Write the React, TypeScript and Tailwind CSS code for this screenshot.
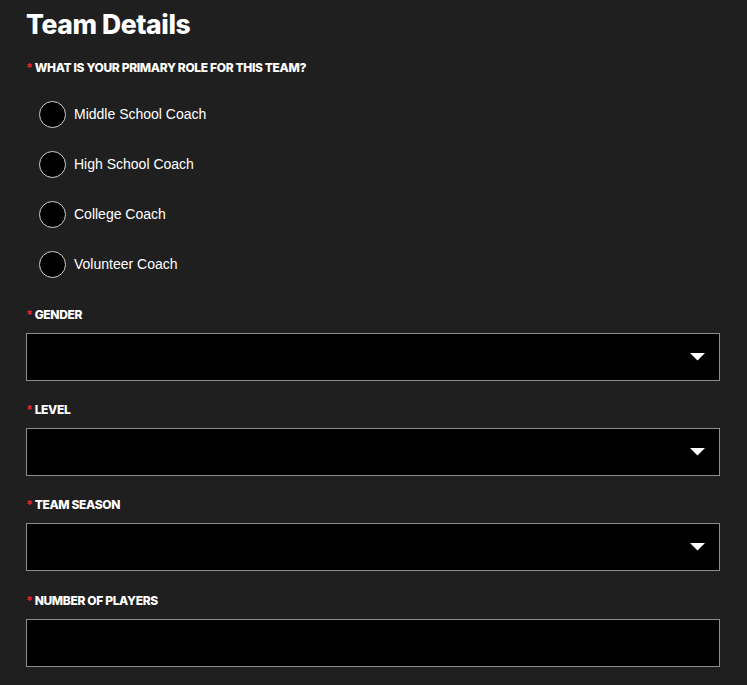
import React from "react";

const roles = ["Middle School Coach", "High School Coach", "College Coach", "Volunteer Coach"];

function Label({ text }: { text: string }) {
  return (
    <div className="flex items-center leading-4 text-[12px] font-extrabold uppercase tracking-[-0.35px] text-white [font-family:Inter,sans-serif]">
      <span className="text-[#e8242b] mr-[2px]">*</span>
      <span>{text}</span>
    </div>
  );
}

function SelectBox() {
  return (
    <div className="mt-[10px] h-[48px] bg-black border border-[#8c8c8c] flex items-center justify-end pr-[14px]">
      <svg width="15" height="8" viewBox="0 0 15 8">
        <polygon points="0,0 15,0 7.5,7.5" fill="#ffffff" />
      </svg>
    </div>
  );
}

function InputBox() {
  return <div className="mt-[10px] h-[48px] bg-black border border-[#8c8c8c]" />;
}

export default function App() {
  return (
    <div className="w-[747px] h-[685px] bg-[#1f1f1f] pl-[26px] pr-[27px] pt-[8px] overflow-hidden">
      <h1 className="text-[26.5px] leading-[32px] font-extrabold text-white tracking-[-0.4px] [font-family:Inter,sans-serif]">
        Team Details
      </h1>
      <div className="mt-[20px]">
        <Label text="What is your primary role for this team?" />
      </div>
      <div className="mt-[13px] flex flex-col">
        {roles.map((r) => (
          <label key={r} className="h-[50px] flex items-center pl-[13px]">
            <span className="w-[27px] h-[27px] rounded-full bg-black border border-[#d0d0d0]" />
            <span className="ml-[8px] text-[14px] text-white [font-family:'Liberation_Sans',Arial,sans-serif]">
              {r}
            </span>
          </label>
        ))}
      </div>
      <div className="mt-[18px]">
        <Label text="Gender" />
        <SelectBox />
      </div>
      <div className="mt-[21px]">
        <Label text="Level" />
        <SelectBox />
      </div>
      <div className="mt-[21px]">
        <Label text="Team Season" />
        <SelectBox />
      </div>
      <div className="mt-[22px]">
        <Label text="Number of Players" />
        <InputBox />
      </div>
    </div>
  );
}
